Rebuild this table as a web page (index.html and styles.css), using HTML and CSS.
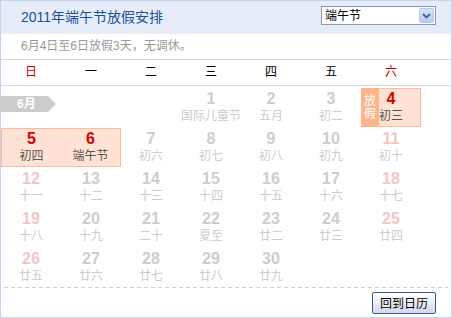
FILE: index.html
```html
<!DOCTYPE html>
<html lang="zh-CN">
<head>
<meta charset="utf-8">
<title>2011年端午节放假安排</title>
<link rel="stylesheet" href="styles.css">
</head>
<body>
<div class="cal">
  <div class="hd">
    <h1 class="title">2011年端午节放假安排</h1>
    <div class="sel">
      <span class="sel-text">端午节</span>
      <span class="sel-btn"><svg width="9" height="6" viewBox="0 0 9 6"><path d="M1 1 L4.5 4.5 L8 1" fill="none" stroke="#4a6190" stroke-width="1.8"/></svg></span>
    </div>
  </div>
  <div class="sub">6月4日至6日放假3天，无调休。</div>
  <div class="week">
    <span class="red">日</span><span>一</span><span>二</span><span>三</span><span>四</span><span>五</span><span class="red">六</span>
  </div>
  <div class="grid">
    <div class="tag">6月</div>
    <div class="cell"></div>
    <div class="cell"></div>
    <div class="cell"></div>
    <div class="cell"><b class="num">1</b><span class="lun">国际儿童节</span></div>
    <div class="cell"><b class="num">2</b><span class="lun">五月</span></div>
    <div class="cell"><b class="num">3</b><span class="lun">初二</span></div>
    <div class="cell hol l r"><span class="fj">放<br>假</span><b class="num">4</b><span class="lun">初三</span></div>

    <div class="cell hol l"><b class="num">5</b><span class="lun">初四</span></div>
    <div class="cell hol r"><b class="num">6</b><span class="lun">端午节</span></div>
    <div class="cell"><b class="num">7</b><span class="lun">初六</span></div>
    <div class="cell"><b class="num">8</b><span class="lun">初七</span></div>
    <div class="cell"><b class="num">9</b><span class="lun">初八</span></div>
    <div class="cell"><b class="num">10</b><span class="lun">初九</span></div>
    <div class="cell we"><b class="num">11</b><span class="lun">初十</span></div>

    <div class="cell we"><b class="num">12</b><span class="lun">十一</span></div>
    <div class="cell"><b class="num">13</b><span class="lun">十二</span></div>
    <div class="cell"><b class="num">14</b><span class="lun">十三</span></div>
    <div class="cell"><b class="num">15</b><span class="lun">十四</span></div>
    <div class="cell"><b class="num">16</b><span class="lun">十五</span></div>
    <div class="cell"><b class="num">17</b><span class="lun">十六</span></div>
    <div class="cell we"><b class="num">18</b><span class="lun">十七</span></div>

    <div class="cell we"><b class="num">19</b><span class="lun">十八</span></div>
    <div class="cell"><b class="num">20</b><span class="lun">十九</span></div>
    <div class="cell"><b class="num">21</b><span class="lun">二十</span></div>
    <div class="cell"><b class="num">22</b><span class="lun">夏至</span></div>
    <div class="cell"><b class="num">23</b><span class="lun">廿二</span></div>
    <div class="cell"><b class="num">24</b><span class="lun">廿三</span></div>
    <div class="cell we"><b class="num">25</b><span class="lun">廿四</span></div>

    <div class="cell we"><b class="num">26</b><span class="lun">廿五</span></div>
    <div class="cell"><b class="num">27</b><span class="lun">廿六</span></div>
    <div class="cell"><b class="num">28</b><span class="lun">廿七</span></div>
    <div class="cell"><b class="num">29</b><span class="lun">廿八</span></div>
    <div class="cell"><b class="num">30</b><span class="lun">廿九</span></div>
  </div>
  <div class="dash"></div>
  <div class="ft"><button class="back">回到日历</button></div>
</div>
</body>
</html>
```
FILE: styles.css
```css
* { box-sizing: border-box; }
html, body { margin: 0; padding: 0; background: #fff; }
body { font-family: "Liberation Sans", "Noto Sans CJK SC", sans-serif; font-size: 12px; }

.cal {
  width: 452px;
  height: 318px;
  border: 1px solid #c2d5f2;
  display: flex;
  flex-direction: column;
  background: #fff;
}

.hd {
  height: 33px;
  background: #e6edf8;
  display: flex;
  justify-content: space-between;
  align-items: flex-start;
  padding: 0 15px 0 20px;
}
.title {
  margin: 6px 0 0;
  font-size: 14px;
  line-height: 20px;
  font-weight: normal;
  color: #1d4e9b;
}
.sel {
  margin-top: 5px;
  width: 115px;
  height: 19px;
  border: 1px solid #7f9db9;
  background: #fff;
  display: flex;
  align-items: center;
  justify-content: space-between;
  padding: 0 1px 0 3px;
}
.sel-text { font-size: 12px; line-height: 16px; color: #000; }
.sel-btn {
  width: 15px;
  height: 15px;
  border: 1px solid #b6c8ee;
  border-radius: 2px;
  background: linear-gradient(#d6e2fb, #b9cdf3);
  display: flex;
  align-items: center;
  justify-content: center;
}

.sub {
  height: 26px;
  border-bottom: 1px solid #ddd;
  padding-left: 20px;
  line-height: 25px;
  color: #999;
  font-size: 12px;
}

.week {
  height: 26px;
  border-bottom: 1px solid #ddd;
  display: grid;
  grid-template-columns: repeat(7, 60px);
  line-height: 25px;
  font-size: 12px;
  color: #000;
}
.week span { text-align: center; }
.week .red { color: #c80000; }

.grid {
  position: relative;
  height: 201px;
  padding-top: 2px;
  display: grid;
  grid-template-columns: repeat(7, 60px);
  grid-auto-rows: 39px;
  row-gap: 1px;
}
.tag {
  position: absolute;
  left: -1px;
  top: 10px;
  width: 56px;
  height: 16px;
  background: #cccccc;
  clip-path: polygon(0 0, 48px 0, 56px 50%, 48px 100%, 0 100%);
  color: #fff;
  font-weight: bold;
  font-size: 12px;
  line-height: 16px;
  padding-left: 17px;
}

.cell {
  position: relative;
  display: flex;
  flex-direction: column;
  align-items: center;
  padding-top: 2px;
}
.num {
  font-family: "Liberation Sans", sans-serif;
  font-weight: bold;
  font-size: 16px;
  line-height: 18px;
  color: #cdcdcd;
}
.lun {
  font-size: 12px;
  line-height: 16px;
  color: #cccccc;
  white-space: nowrap;
}
.we .num { color: #f3c5c5; }

.hol {
  background: #ffe2d3;
  border-top: 1px solid #ffb997;
  border-bottom: 1px solid #ffb997;
  padding-top: 1px;
}
.hol.l { border-left: 1px solid #ffb997; }
.hol.r { border-right: 1px solid #ffb997; }
.hol .num { color: #d40000; }
.hol .lun { color: #555; }
.fj {
  position: absolute;
  left: -1px;
  top: -1px;
  bottom: -1px;
  width: 18px;
  background: #ffb48e;
  color: #fff;
  font-size: 12px;
  line-height: 13px;
  display: flex;
  align-items: center;
  justify-content: center;
  text-align: center;
}

.dash {
  height: 1px;
  margin: 0 3px;
  background: repeating-linear-gradient(to right, #cfcfcf 0 4px, transparent 4px 7px);
}
.ft {
  flex: 1;
  display: flex;
  justify-content: flex-end;
  align-items: flex-start;
  padding: 4px 15px 0 0;
}
.back {
  width: 64px;
  height: 22px;
  margin: 0;
  padding: 0;
  border: 1px solid #2f5b8a;
  border-radius: 2px;
  background: linear-gradient(#ffffff, #ececf6 50%, #d6d6ea);
  font-family: "Noto Sans CJK SC", sans-serif;
  font-size: 12px;
  line-height: 18px;
  color: #000;
}
```
